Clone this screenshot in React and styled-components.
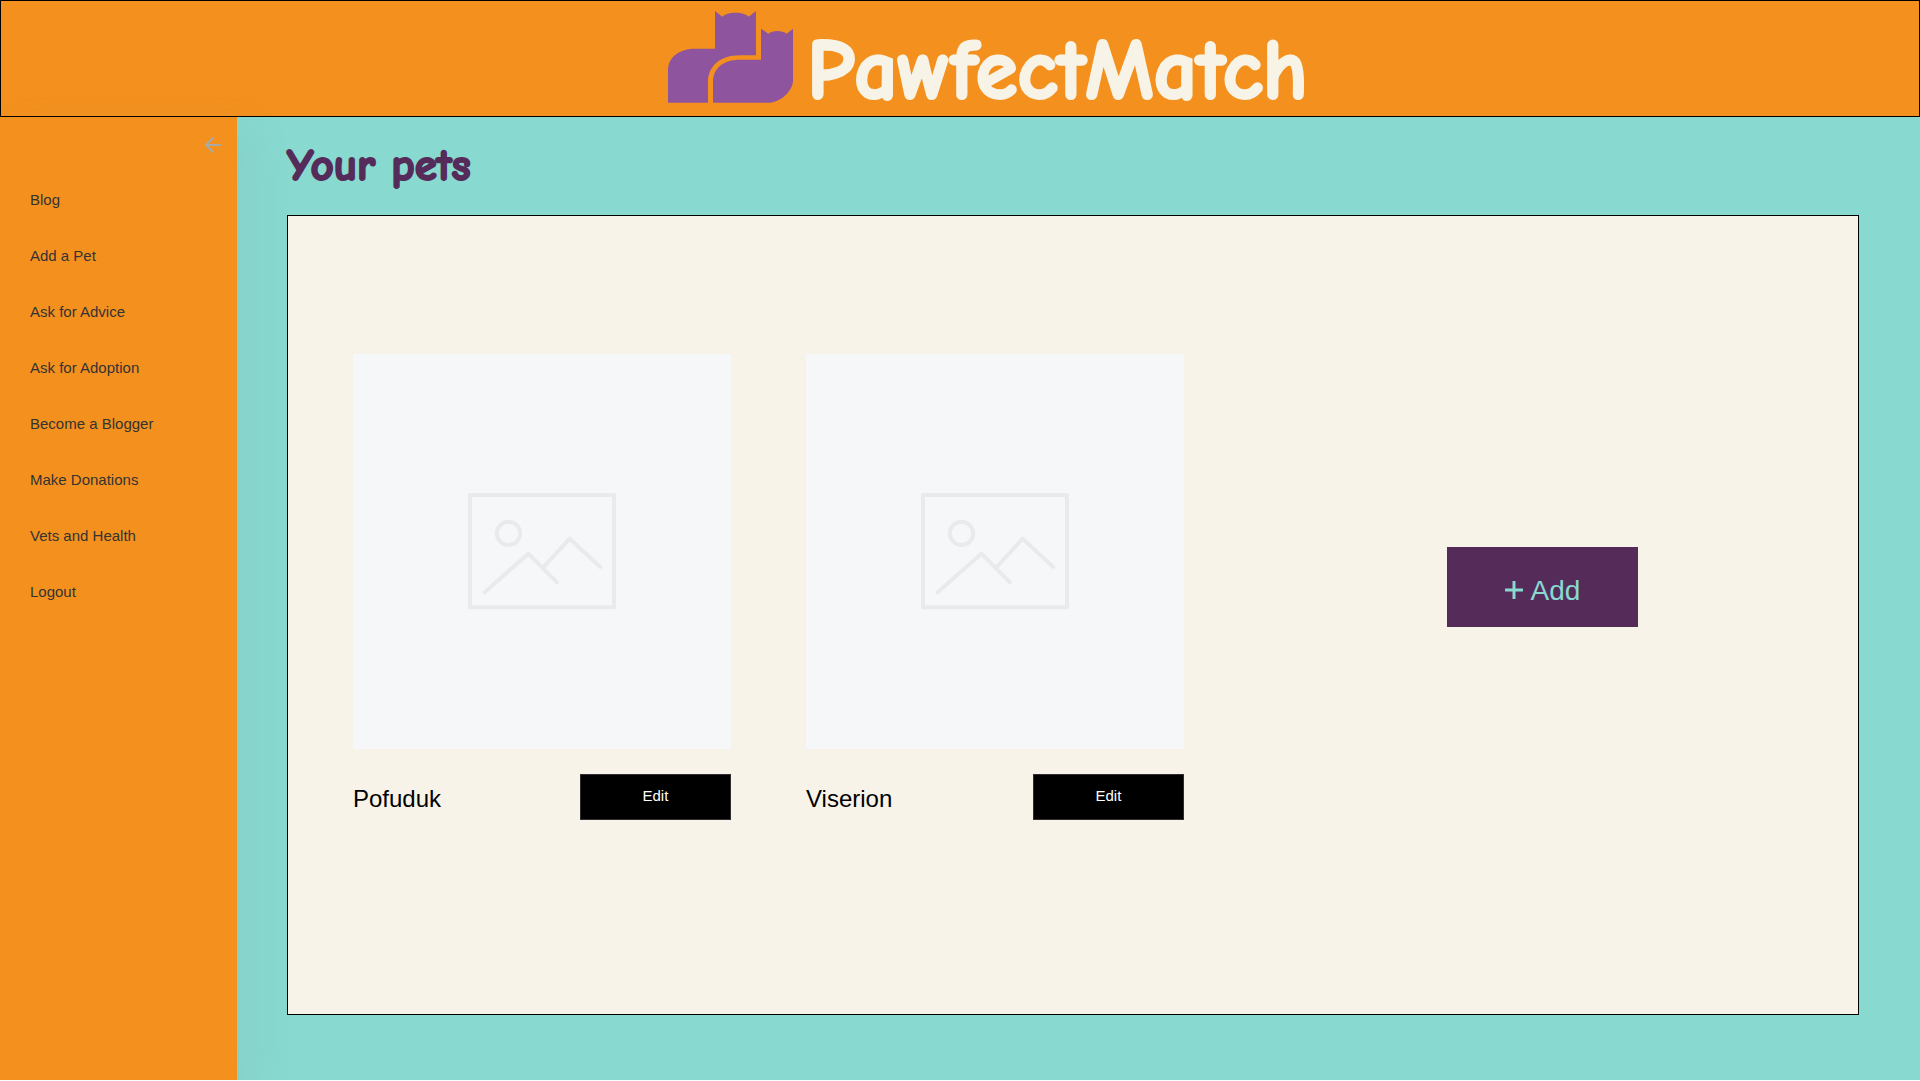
import React from "react";
import styled, { createGlobalStyle } from "styled-components";
import { ArrowLeft } from "lucide-react";

const GlobalStyle = createGlobalStyle`
  *, *::before, *::after { box-sizing: border-box; }
  body {
    margin: 0;
    font-family: "Liberation Sans", Arial, sans-serif;
    color: #000;
  }
`;

const Header = styled.header`
  display: flex;
  justify-content: center;
  gap: 14px;
  height: 117px;
  padding: 10px 0 0 56px;
  border: 1px solid #000;
  background: #f4911e;
`;

const Brand = styled.h1`
  margin: 0;
  font-family: "Comic Neue", Lato, sans-serif;
  font-size: 85px;
  font-weight: 700;
  line-height: 118px;
  height: 92px;
  color: #f8f3e7;
  -webkit-text-stroke: 3px #f8f3e7;
`;

const Layout = styled.div`
  display: flex;
  background: #88d9cf;
`;

const Sidebar = styled.aside`
  flex: 0 0 237px;
  display: flex;
  flex-direction: column;
  gap: 15px;
  padding-top: 16px;
  background: #f4911e;
  box-shadow: 14px 17px 40px rgba(112, 144, 176, 0.12);
`;

const CollapseButton = styled.button`
  align-self: flex-end;
  display: flex;
  margin-right: 12px;
  padding: 0;
  border: 0;
  background: none;
  color: #a9a9a9;
  cursor: pointer;
`;

const Menu = styled.ul`
  margin: 0;
  padding: 0;
  list-style: none;
`;

const MenuLink = styled.a`
  display: block;
  padding: 0 30px;
  font-size: 15px;
  line-height: 56px;
  color: #333;
  text-decoration: none;
`;

const Main = styled.main`
  flex: 1;
  min-width: 0;
  padding: 24px 61px 65px 50px;
`;

const Title = styled.h2`
  margin: 0 0 26px;
  font-family: "Comic Neue", Lato, sans-serif;
  font-size: 45px;
  font-weight: 700;
  line-height: 48px;
  color: #552b5a;
  -webkit-text-stroke: 2px #552b5a;
`;

const Panel = styled.section`
  display: grid;
  grid-template-columns: 2fr 2fr 3fr;
  column-gap: 75px;
  align-items: center;
  min-height: 800px;
  padding: 0 32px 56px 65px;
  border: 1px solid #000;
  background: #f8f3e8;
`;

const Photo = styled.div`
  display: flex;
  align-items: center;
  justify-content: center;
  height: 395px;
  background: #f5f7f9;
`;

const CardFooter = styled.div`
  display: grid;
  grid-template-columns: 3fr 2fr;
  margin-top: 25px;
`;

const PetName = styled.h3`
  margin: 0;
  font-size: 24px;
  font-weight: 400;
  line-height: 50px;
  height: 46px;
`;

const EditButton = styled.button`
  height: 46px;
  padding: 0 0 4px;
  border: 1px solid #332b33;
  background: #000;
  color: #fff;
  font-family: inherit;
  font-size: 15px;
  cursor: pointer;
`;

const AddButton = styled.button`
  justify-self: center;
  display: flex;
  align-items: center;
  justify-content: center;
  gap: 8px;
  width: 191px;
  height: 80px;
  padding: 7px 0 0;
  border: 0;
  background: #552b5a;
  color: #88d9cf;
  font-family: inherit;
  font-size: 28px;
  cursor: pointer;

  svg {
    margin-bottom: 2px;
  }
`;

const Logo = () => (
  <svg width="125" height="92" viewBox="84 34 375 276" fill="#8e559e" aria-hidden="true">
    <path d="M84 309V213C84 170 120 147 166 147H225V34L247 51C262 35 310 35 326 51L348 34V167H300C240 167 204 200 204 248V309Z" />
    <path d="M219 309V248C219 205 250 180 300 180H363V87L385 102C397 91 427 91 440 102L459 87V248C455 275 425 305 392 309Z" />
  </svg>
);

const PlaceholderIcon = () => (
  <svg
    width="148"
    height="117"
    viewBox="384 459 444 351"
    fill="none"
    stroke="#e9eaeb"
    strokeWidth="12"
    strokeLinecap="round"
    strokeLinejoin="round"
    aria-hidden="true"
  >
    <rect x="390" y="465" width="432" height="337" />
    <circle cx="505.500" cy="580" r="35" />
    <path d="M434 757L565 641L651 727M610 682L689 596L781 681" />
  </svg>
);

const PlusIcon = () => (
  <svg width="18" height="18" viewBox="0 0 18 18" stroke="currentColor" strokeWidth="3" aria-hidden="true">
    <path d="M9 0V18M0 9H18" />
  </svg>
);

const links = [
  "Blog",
  "Add a Pet",
  "Ask for Advice",
  "Ask for Adoption",
  "Become a Blogger",
  "Make Donations",
  "Vets and Health",
  "Logout",
];

const pets = ["Pofuduk", "Viserion"];

export default function App() {
  return (
    <>
      <GlobalStyle />
      <Header>
        <Logo />
        <Brand>PawfectMatch</Brand>
      </Header>
      <Layout>
        <Sidebar>
          <CollapseButton type="button" aria-label="Collapse menu">
            <ArrowLeft size={24} />
          </CollapseButton>
          <nav>
            <Menu>
              {links.map((label) => (
                <li key={label}>
                  <MenuLink href="#">{label}</MenuLink>
                </li>
              ))}
            </Menu>
          </nav>
        </Sidebar>
        <Main>
          <Title>Your pets</Title>
          <Panel>
            {pets.map((name) => (
              <article key={name}>
                <Photo>
                  <PlaceholderIcon />
                </Photo>
                <CardFooter>
                  <PetName>{name}</PetName>
                  <EditButton type="button">Edit</EditButton>
                </CardFooter>
              </article>
            ))}
            <AddButton type="button">
              <PlusIcon />
              Add
            </AddButton>
          </Panel>
        </Main>
      </Layout>
    </>
  );
}
